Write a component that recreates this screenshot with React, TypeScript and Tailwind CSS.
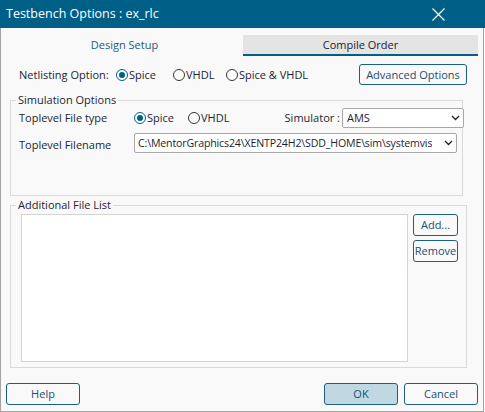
import React from 'react';

type RadioProps = { label: string; checked?: boolean; className?: string };

function Radio({ label, checked, className = '' }: RadioProps) {
  return (
    <div className={`flex items-center ${className}`}>
      <span
        className={`flex h-[12px] w-[12px] items-center justify-center rounded-full border bg-white ${
          checked ? 'border-[#005f87]' : 'border-[#333333]'
        }`}
      >
        {checked && <span className="h-[6px] w-[6px] rounded-full bg-[#005f87]" />}
      </span>
      <span className="ml-[1px] text-[#1e1e32]">{label}</span>
    </div>
  );
}

function Chevron() {
  return (
    <svg width="9" height="6" viewBox="0 0 9 6" className="shrink-0">
      <polyline points="1,1 4.5,4.5 8,1" fill="none" stroke="#222" strokeWidth="1.3" />
    </svg>
  );
}

function Btn({ children, className = '' }: { children: React.ReactNode; className?: string }) {
  return (
    <button
      className={`flex items-center justify-center rounded-[3px] border border-[#1b5f86] text-[#1b4f74] ${className}`}
    >
      {children}
    </button>
  );
}

export default function App() {
  return (
    <div className="w-[485px] h-[412px] bg-white text-[11px] leading-[16px]" style={{ fontFamily: '"Open Sans", "Noto Sans", sans-serif' }}>
      {/* Title bar */}
      <div className="flex h-[28px] w-[485px] items-center justify-between bg-[#005f87] pl-[6px] pr-[40px] text-[12.5px] text-white">
        <span>Testbench Options : ex_rlc</span>
        <svg width="13" height="13" viewBox="0 0 13 13">
          <path d="M0.5 0.5 L12.5 12.5 M12.5 0.5 L0.5 12.5" stroke="#fff" strokeWidth="1.2" />
        </svg>
      </div>

      <div className="flex h-[384px] w-[484px] flex-col border-x border-b border-[#a3a3a3] bg-[#f9f9f9] px-[5px]">
        {/* Tabs */}
        <div className="mt-[7px] flex h-[21px]">
          <div className="flex w-[237px] items-center justify-center pb-[2px] text-[#1e5a82]">Design Setup</div>
          <div className="flex flex-1 items-center justify-center border-b-[2px] border-[#005f87] bg-[#e4e4e4] text-[#222233]">
            Compile Order
          </div>
        </div>

        {/* Netlisting option */}
        <div className="mt-[8px] flex h-[21px] items-center">
          <span className="ml-[13px] w-[97px] text-[#1e1e32]">Netlisting Option:</span>
          <Radio label="Spice" checked className="w-[57px]" />
          <Radio label="VHDL" className="w-[53px]" />
          <Radio label="Spice &amp; VHDL" />
          <Btn className="ml-auto mr-[11px] h-[21px] w-[108px]">Advanced Options</Btn>
        </div>

        {/* Simulation options */}
        <fieldset className="ml-[4px] mr-[15px] mt-[7px] h-[104px] border border-[#d9d9d9]">
          <legend className="ml-[5px] px-[2px] text-[#1e1e32]">Simulation Options</legend>
          <div className="flex h-[20px] items-center pl-[8px]">
            <span className="w-[115px] text-[#1e1e32]">Toplevel File type</span>
            <Radio label="Spice" checked className="w-[54px]" />
            <Radio label="VHDL" />
            <span className="ml-auto mr-[2px] text-[#1e1e32]">Simulator :</span>
            <div className="mr-[-2px] flex h-[20px] w-[122px] items-center justify-between rounded-[2px] border border-[#a8a8a8] bg-white pl-[4px] pr-[3px] text-[#1e1e32]">
              <span>AMS</span>
              <Chevron />
            </div>
          </div>
          <div className="mt-[5px] flex h-[20px] items-center pl-[8px]">
            <span className="w-[115px] pt-[4px] text-[#1e1e32]">Toplevel Filename</span>
            <div className="flex h-[20px] w-[323px] items-center justify-between rounded-[2px] border border-[#a8a8a8] bg-white pl-[3px] pr-[3px] text-[#1e1e32]">
              <span className="overflow-hidden whitespace-nowrap text-[10.6px] tracking-[-0.15px]">C:\MentorGraphics24\XENTP24H2\SDD_HOME\sim\systemvis</span>
              <Chevron />
            </div>
          </div>
        </fieldset>

        {/* Additional file list */}
        <fieldset className="ml-[4px] mr-[11px] mt-[1px] h-[171px] border border-[#d9d9d9]">
          <legend className="ml-[5px] px-[2px] text-[#1e1e32]">Additional File List</legend>
          <div className="mt-[1px] flex pl-[10px]">
            <div className="h-[148px] w-[387px] border border-[#d4d4d4] bg-white" />
            <div className="ml-[5px] flex flex-col gap-[4px]">
              <Btn className="h-[22px] w-[45px]">Add...</Btn>
              <Btn className="h-[22px] w-[45px]">Remove</Btn>
            </div>
          </div>
        </fieldset>

        {/* Bottom buttons */}
        <div className="mt-[15px] flex h-[22px]">
          <Btn className="h-[22px] w-[74px]">Help</Btn>
          <Btn className="ml-auto h-[22px] w-[74px] bg-[#c0d8e2]">OK</Btn>
          <Btn className="ml-[6px] h-[22px] w-[74px]">Cancel</Btn>
        </div>
      </div>
    </div>
  );
}
